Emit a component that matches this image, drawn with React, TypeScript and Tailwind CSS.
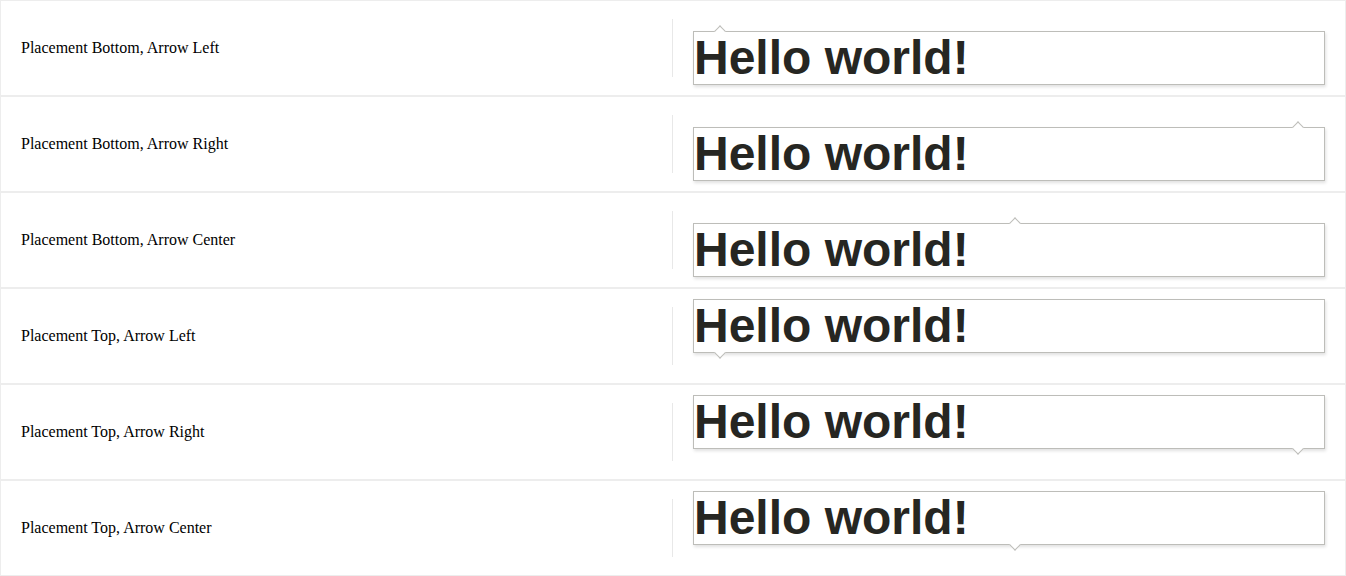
const rows = [
  { label: 'Placement Bottom, Arrow Left', placement: 'bottom', arrow: 'left' },
  { label: 'Placement Bottom, Arrow Right', placement: 'bottom', arrow: 'right' },
  { label: 'Placement Bottom, Arrow Center', placement: 'bottom', arrow: 'center' },
  { label: 'Placement Top, Arrow Left', placement: 'top', arrow: 'left' },
  { label: 'Placement Top, Arrow Right', placement: 'top', arrow: 'right' },
  { label: 'Placement Top, Arrow Center', placement: 'top', arrow: 'center' },
] as const

type Row = (typeof rows)[number]

function Tip({ row }: { row: Row }) {
  const up = row.placement === 'bottom'
  const side =
    row.arrow === 'left' ? 'left-[22px]' : row.arrow === 'right' ? 'right-[22px]' : 'left-[317px]'
  return (
    <div
      className={`relative border border-[#bdbdb9] bg-white shadow-[1px_2px_3px_rgba(0,0,0,0.12)] ${
        up ? 'mt-[20px]' : 'mb-[20px]'
      }`}
    >
      {/* flèche */}
      <div
        className={`absolute h-[8px] w-[8px] rotate-45 bg-white border-[#bdbdb9] ${side} ${
          up ? '-top-[5px] border-l border-t' : '-bottom-[5px] border-b border-r'
        }`}
      />
      <div className="relative h-[52px] font-['Liberation_Sans',Arial,sans-serif] text-[48px] font-bold leading-[52px] text-[#262622]">
        Hello world!
      </div>
    </div>
  )
}

export default function App() {
  return (
    <div className="w-[1346px] bg-white">
      {rows.map((row) => (
        <div key={row.label} className="flex h-[96px] border border-[#ededed]">
          <div className="flex w-[671px] items-center pl-5 font-['Liberation_Serif','Times_New_Roman',serif] text-[16px] text-black">
            {row.label}
          </div>
          <div className="flex flex-1 items-center">
            <div className="h-[58px] w-px bg-[#e8e8e8]" />
            <div className="flex-1 px-5">
              <Tip row={row} />
            </div>
          </div>
        </div>
      ))}
    </div>
  )
}
